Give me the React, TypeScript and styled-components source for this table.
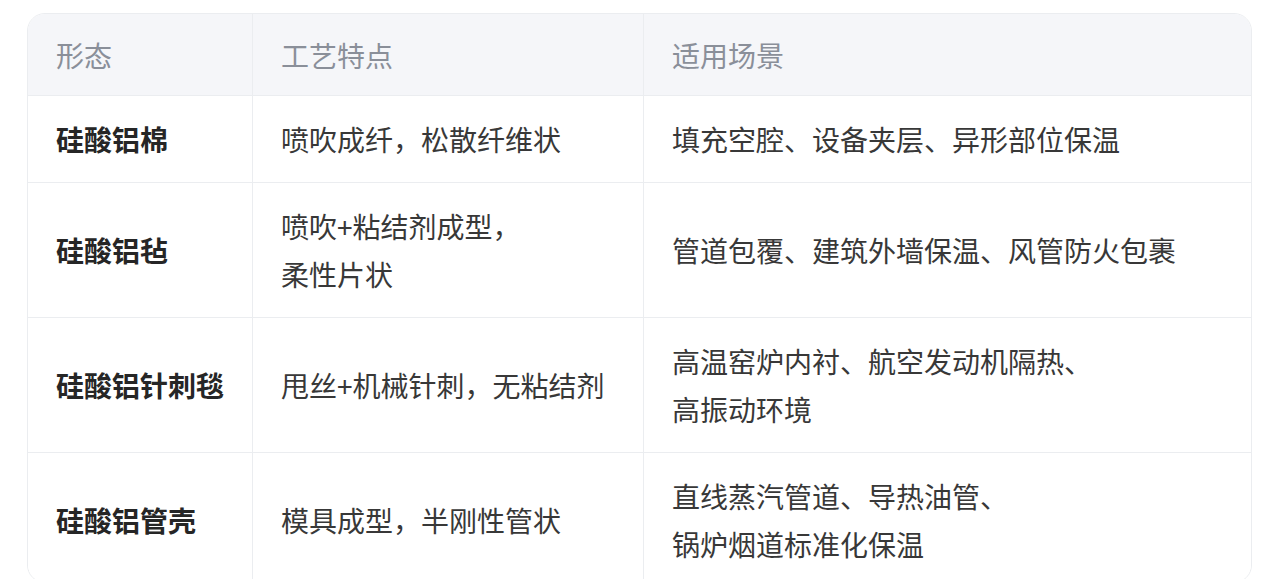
import React from "react";
import styled, { createGlobalStyle } from "styled-components";

const GlobalStyle = createGlobalStyle`
  html, body {
    margin: 0;
    padding: 0;
    background: #ffffff;
    overflow: hidden;
  }
  body {
    font-family: "Noto Sans CJK SC", "Noto Sans", sans-serif;
  }
`;

const Page = styled.div`
  padding: 13px 27px 0 27px;
`;

const TableCard = styled.div`
  width: 1225px;
  box-sizing: border-box;
  border: 1px solid #ebedf0;
  border-radius: 18px;
  overflow: hidden;
  background: #ffffff;
`;

const Row = styled.div<{ $head?: boolean; $last?: boolean }>`
  display: grid;
  grid-template-columns: 225px 391px 1fr;
  background: ${(p) => (p.$head ? "#f5f6f9" : "#ffffff")};
  border-bottom: ${(p) => (p.$last ? "none" : "1px solid #ebedf0")};
`;

const Cell = styled.div<{ $head?: boolean; $strong?: boolean; $end?: boolean; $tail?: boolean }>`
  box-sizing: border-box;
  display: flex;
  align-items: center;
  padding: ${(p) => (p.$head ? "16.5px 28px" : p.$tail ? "19px 28px 14px" : "19px 28px")};
  border-right: ${(p) => (p.$end ? "none" : "1px solid #ebedf0")};
  font-size: 28px;
  line-height: 48px;
  color: ${(p) => (p.$head ? "#8a8f99" : p.$strong ? "#262626" : "#383838")};
  font-weight: ${(p) => (p.$strong ? 700 : 400)};
`;

type Item = { form: string; craft: string[]; scene: string[] };

const rows: Item[] = [
  { form: "硅酸铝棉", craft: ["喷吹成纤，松散纤维状"], scene: ["填充空腔、设备夹层、异形部位保温"] },
  { form: "硅酸铝毡", craft: ["喷吹+粘结剂成型，", "柔性片状"], scene: ["管道包覆、建筑外墙保温、风管防火包裹"] },
  { form: "硅酸铝针刺毯", craft: ["甩丝+机械针刺，无粘结剂"], scene: ["高温窑炉内衬、航空发动机隔热、", "高振动环境"] },
  { form: "硅酸铝管壳", craft: ["模具成型，半刚性管状"], scene: ["直线蒸汽管道、导热油管、", "锅炉烟道标准化保温"] },
];

const Lines: React.FC<{ lines: string[] }> = ({ lines }) => (
  <span>
    {lines.map((l, i) => (
      <React.Fragment key={i}>
        {i > 0 && <br />}
        {l}
      </React.Fragment>
    ))}
  </span>
);

export default function App() {
  return (
    <Page>
      <GlobalStyle />
      <TableCard>
        <Row $head>
          <Cell $head>形态</Cell>
          <Cell $head>工艺特点</Cell>
          <Cell $head $end>适用场景</Cell>
        </Row>
        {rows.map((r, i) => {
          const last = i === rows.length - 1;
          return (
            <Row key={r.form} $last={last}>
              <Cell $strong $tail={last}>{r.form}</Cell>
              <Cell $tail={last}>
                <Lines lines={r.craft} />
              </Cell>
              <Cell $end $tail={last}>
                <Lines lines={r.scene} />
              </Cell>
            </Row>
          );
        })}
      </TableCard>
    </Page>
  );
}
